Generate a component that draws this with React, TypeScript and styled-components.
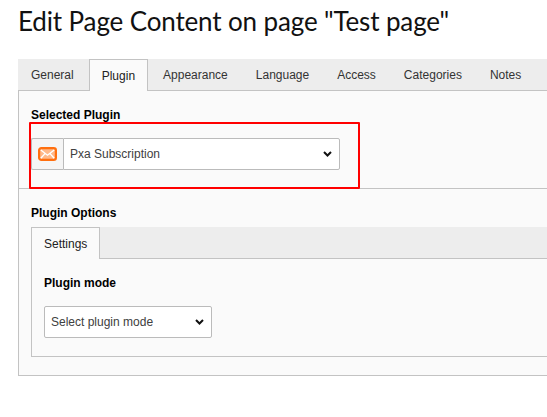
import React from "react";
import styled, { createGlobalStyle } from "styled-components";

const Global = createGlobalStyle`
  html, body { margin: 0; padding: 0; background: #fff; overflow: hidden; }
  body { font-family: "Liberation Sans", Arial, sans-serif; font-size: 12px; color: #000; }
`;

const Page = styled.div`
  width: 547px;
  height: 417px;
  overflow: hidden;
  padding: 0 0 0 18px;
  box-sizing: border-box;
`;

const Title = styled.h1`
  margin: 0;
  height: 59px;
  box-sizing: border-box;
  padding-top: 3px;
  font-family: "Lato", sans-serif;
  font-weight: 400;
  font-size: 26px;
  line-height: 36px;
  letter-spacing: -0.14px;
  color: #111;
  white-space: nowrap;
`;

const Panel = styled.div`
  width: 560px;
  position: relative;
`;

const TabBar = styled.div`
  display: flex;
  height: 31px;
  background: #ededed;
  border-bottom: 1px solid #c3c3c3;
`;

const Tab = styled.div<{ $active?: boolean }>`
  box-sizing: border-box;
  height: ${(p) => (p.$active ? "calc(100% + 1px)" : "100%")};
  display: flex;
  align-items: center;
  padding: 0 ${(p) => (p.$active ? "12px" : "14px")};
  margin: 0 ${(p) => (p.$active ? "1px" : "0")};
  font-size: 12px;
  color: ${(p) => (p.$active ? "#212121" : "#333")};
  background: ${(p) => (p.$active ? "#fafafa" : "transparent")};
  border: ${(p) => (p.$active ? "1px solid #c3c3c3" : "none")};
  border-bottom: none;
  flex: none;
  &:first-child { margin-left: ${(p) => (p.$active ? "0" : "-1px")}; }
`;

const Body = styled.div`
  background: #fafafa;
  border: 1px solid #c3c3c3;
  border-top: none;
  height: 285px;
  box-sizing: border-box;
`;

const Section = styled.div`
  padding: 17px 12px 0;
  height: 98px;
  box-sizing: border-box;
  border-bottom: 1px solid #c3c3c3;
`;

const Label = styled.div`
  font-size: 12px;
  font-weight: 700;
  line-height: 14px;
  color: #000;
`;

const InputGroup = styled.div`
  display: flex;
  margin-top: 16px;
  width: 309px;
  height: 32px;
`;

const Addon = styled.div`
  width: 32px;
  flex: none;
  box-sizing: border-box;
  background: #f5f5f5;
  border: 1px solid #bbb;
  border-right: none;
  border-radius: 2px 0 0 2px;
  padding-left: 6px;
  display: flex;
  align-items: center;
`;

const SelectBox = styled.div<{ $w?: number }>`
  position: relative;
  width: ${(p) => (p.$w ? `${p.$w}px` : "auto")};
  flex: ${(p) => (p.$w ? "none" : "1")};
  height: 32px;
`;

const Select = styled.select<{ $grouped?: boolean }>`
  appearance: none;
  display: block;
  width: 100%;
  height: 32px;
  box-sizing: border-box;
  font-family: "Liberation Sans", Arial, sans-serif;
  font-size: 12px;
  color: #404040;
  background: #fff;
  border: 1px solid #bbb;
  border-radius: ${(p) => (p.$grouped ? "0 2px 2px 0" : "2px")};
  padding: 0 20px 0 6px;
  outline: none;
`;

const Chevron = styled.svg`
  position: absolute;
  right: 8px;
  top: 13px;
  width: 9px;
  height: 6px;
  pointer-events: none;
`;

const Options = styled.div`
  padding: 17px 12px 0;
`;

const SubTabs = styled.div`
  display: flex;
  height: 31px;
  margin-top: 7px;
  background: #ededed;
  border-bottom: 1px solid #c3c3c3;
`;

const SubBody = styled.div`
  background: #fafafa;
  border: 1px solid #c3c3c3;
  border-top: none;
  height: 98px;
  box-sizing: border-box;
  padding: 17px 12px 0;
`;

const Gap = styled.div`
  height: 16px;
`;

const Highlight = styled.div`
  position: absolute;
  left: 11px;
  top: 63px;
  width: 331px;
  height: 67px;
  box-sizing: border-box;
  border: 2px solid #f00;
  border-radius: 1px;
  pointer-events: none;
`;

const MailIcon = () => (
  <svg width="19" height="14" viewBox="0 0 19 14" aria-hidden="true">
    <rect x="1.1" y="1.1" width="16.8" height="11.8" rx="2.2" fill="#ffb98a" stroke="#ff6f0f" strokeWidth="2.2" />
    <path d="M2.8 3 L9.5 8.2 L16.2 3 M2.8 11.2 L7.2 6.4 M16.2 11.2 L11.8 6.4" fill="none" stroke="#fff" strokeWidth="1.4" />
  </svg>
);

const Arrow = () => (
  <Chevron viewBox="0 0 9 6" aria-hidden="true">
    <path d="M1 1 L4.5 4.5 L8 1" fill="none" stroke="#111" strokeWidth="2" />
  </Chevron>
);

export default function App() {
  return (
    <Page>
      <Global />
      <Title>Edit Page Content on page "Test page"</Title>
      <Panel>
        <TabBar>
          <Tab>General</Tab>
          <Tab $active>Plugin</Tab>
          <Tab>Appearance</Tab>
          <Tab>Language</Tab>
          <Tab>Access</Tab>
          <Tab>Categories</Tab>
          <Tab>Notes</Tab>
        </TabBar>
        <Body>
          <Section>
            <Label>Selected Plugin</Label>
            <InputGroup>
              <Addon><MailIcon /></Addon>
              <SelectBox>
                <Select $grouped defaultValue="pxa">
                  <option value="pxa">Pxa Subscription</option>
                </Select>
                <Arrow />
              </SelectBox>
            </InputGroup>
          </Section>
          <Options>
            <Label>Plugin Options</Label>
            <SubTabs>
              <Tab $active>Settings</Tab>
            </SubTabs>
            <SubBody>
              <Label>Plugin mode</Label>
              <Gap />
              <SelectBox $w={168}>
                <Select defaultValue="">
                  <option value="">Select plugin mode</option>
                </Select>
                <Arrow />
              </SelectBox>
            </SubBody>
          </Options>
        </Body>
        <Highlight />
      </Panel>
    </Page>
  );
}
